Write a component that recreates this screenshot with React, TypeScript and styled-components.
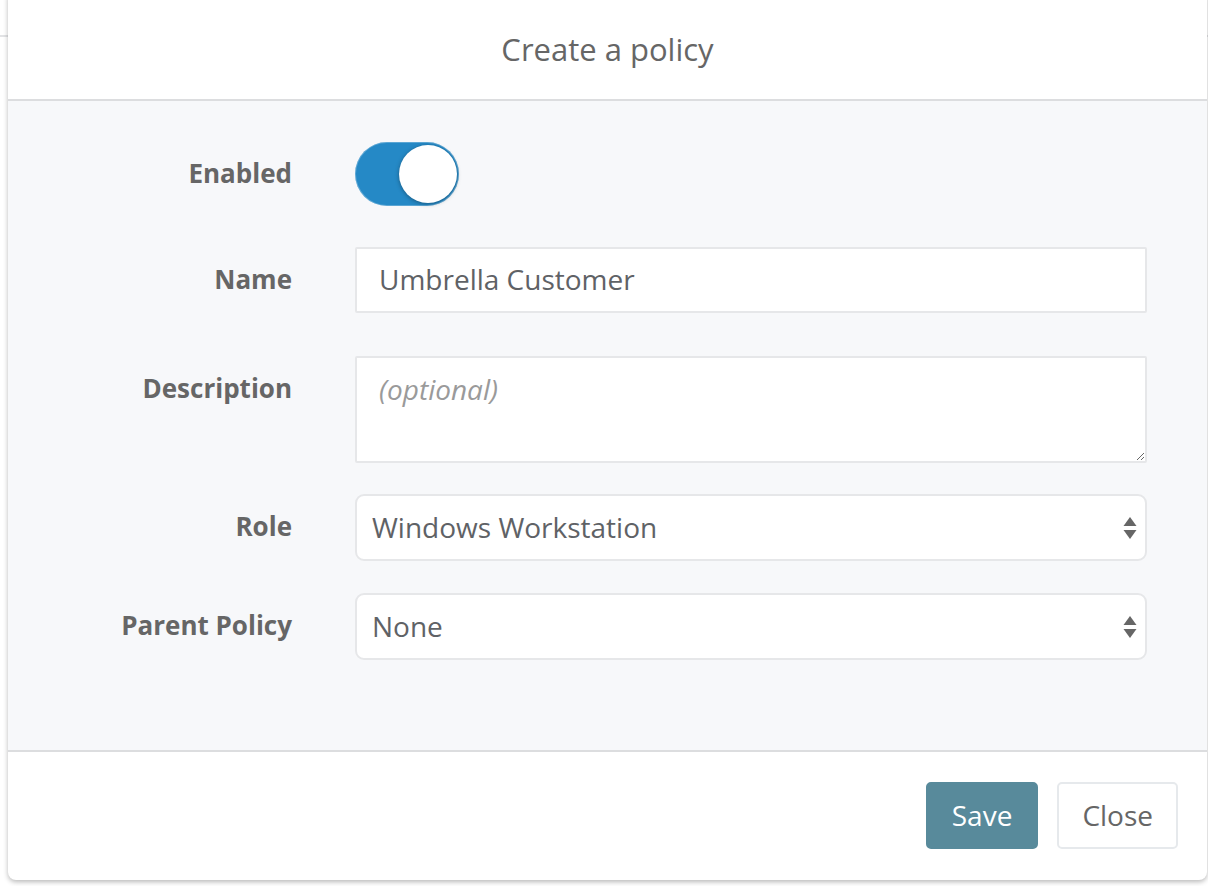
import styled, { createGlobalStyle } from "styled-components";

const GlobalStyle = createGlobalStyle`
    html, body {
        margin: 0;
        padding: 0;
        background: #ffffff;
        overflow: hidden;
    }
    body {
        font-family: "Open Sans", "Liberation Sans", sans-serif;
        color: #666666;
    }
`;

const Page = styled.div`
    position: relative;
    width: 1208px;
    height: 886px;
`;

const PageBar = styled.div`
    height: 35px;
    border-bottom: 2px solid #e2e3e5;
`;

const Modal = styled.div`
    position: absolute;
    left: 8px;
    top: -10px;
    width: 1199px;
    background: #ffffff;
    border-radius: 8px;
    box-shadow: 0 2px 5px rgba(0, 0, 0, 0.28);
    overflow: hidden;
`;

const Header = styled.div`
    height: 111px;
    box-sizing: border-box;
    padding-top: 8px;
    display: flex;
    align-items: center;
    justify-content: center;
    border-bottom: 2px solid #dcdddf;
`;

const Title = styled.h2`
    margin: 0;
    font-size: 31px;
    font-weight: 400;
    color: #666666;
`;

const Body = styled.div`
    background: #f7f8fa;
    padding: 41px 60px 90px 0;
    border-bottom: 2px solid #dcdddf;
`;

const Row = styled.div<{ $mb?: number; $top?: boolean }>`
    display: grid;
    grid-template-columns: 284px 792px;
    column-gap: 63px;
    align-items: ${(p) => (p.$top ? "start" : "center")};
    margin-bottom: ${(p) => p.$mb ?? 0}px;
`;

const Label = styled.label<{ $pt?: number }>`
    text-align: right;
    font-size: 26px;
    font-weight: 700;
    color: #666666;
    padding-top: ${(p) => p.$pt ?? 0}px;
    padding-bottom: 3px;
`;

const Toggle = styled.div`
    position: relative;
    width: 104px;
    height: 64px;
    border-radius: 32px;
    background: #2589c6;
    box-shadow: inset 0 0 0 1px rgba(255, 255, 255, 0.25);
`;

const Knob = styled.div`
    position: absolute;
    top: 3px;
    right: 2px;
    width: 58px;
    height: 58px;
    border-radius: 50%;
    background: #ffffff;
    box-shadow: 0 1px 4px rgba(0, 0, 0, 0.35);
`;

const TextInput = styled.input`
    box-sizing: border-box;
    height: 66px;
    width: 100%;
    border: 2px solid #e6e7e9;
    border-radius: 2px;
    background: #ffffff;
    padding: 0 22px 2px;
    font-family: inherit;
    font-size: 28px;
    color: #5f6266;
    outline: none;
`;

const TextArea = styled.textarea`
    box-sizing: border-box;
    display: block;
    height: 107px;
    width: 100%;
    border: 2px solid #e6e7e9;
    border-radius: 2px;
    background: #ffffff;
    padding: 12px 22px;
    font-family: inherit;
    font-size: 28px;
    color: #5f6266;
    outline: none;

    &::placeholder {
        color: #9a9a9a;
        font-style: italic;
    }
`;

const SelectBox = styled.div`
    position: relative;
    box-sizing: border-box;
    height: 67px;
    width: 100%;
    border: 2px solid #e6e7e9;
    border-radius: 9px;
    background: #ffffff;
    display: flex;
    align-items: center;
    padding: 0 15px 2px;
    font-size: 28px;
    color: #5f6266;
`;

const Arrows = styled.svg`
    position: absolute;
    right: 8px;
    top: 50%;
    transform: translateY(-50%);
`;

const Footer = styled.div`
    display: flex;
    justify-content: flex-end;
    gap: 19px;
    padding: 30px 29px 31px 0;
`;

const Button = styled.button<{ $primary?: boolean }>`
    box-sizing: border-box;
    height: 67px;
    padding: 0 ${(p) => (p.$primary ? 24 : 23)}px 2px;
    font-family: inherit;
    font-size: 28px;
    border-radius: 5px;
    cursor: pointer;
    border: 2px solid ${(p) => (p.$primary ? "#588a9b" : "#e6e9ec")};
    background: ${(p) => (p.$primary ? "#588a9b" : "#ffffff")};
    color: ${(p) => (p.$primary ? "#ffffff" : "#666666")};
`;

function Select({ value }: { value: string }) {
    return (
        <SelectBox>
            {value}
            <Arrows width="14" height="24" viewBox="0 0 14 24">
                <polygon points="7,1 13.5,10 0.5,10" fill="#666" />
                <polygon points="0.5,14 13.5,14 7,23" fill="#666" />
            </Arrows>
        </SelectBox>
    );
}

export default function App() {
    return (
        <>
            <GlobalStyle />
            <Page>
                <PageBar />
                <Modal>
                    <Header>
                        <Title>Create a policy</Title>
                    </Header>
                    <Body>
                        <Row $mb={41}>
                            <Label>Enabled</Label>
                            <Toggle>
                                <Knob />
                            </Toggle>
                        </Row>
                        <Row $mb={43}>
                            <Label>Name</Label>
                            <TextInput defaultValue="Umbrella Customer" />
                        </Row>
                        <Row $mb={31} $top>
                            <Label $pt={14}>Description</Label>
                            <TextArea placeholder="(optional)" />
                        </Row>
                        <Row $mb={32}>
                            <Label>Role</Label>
                            <Select value="Windows Workstation" />
                        </Row>
                        <Row>
                            <Label>Parent Policy</Label>
                            <Select value="None" />
                        </Row>
                    </Body>
                    <Footer>
                        <Button $primary>Save</Button>
                        <Button>Close</Button>
                    </Footer>
                </Modal>
            </Page>
        </>
    );
}
